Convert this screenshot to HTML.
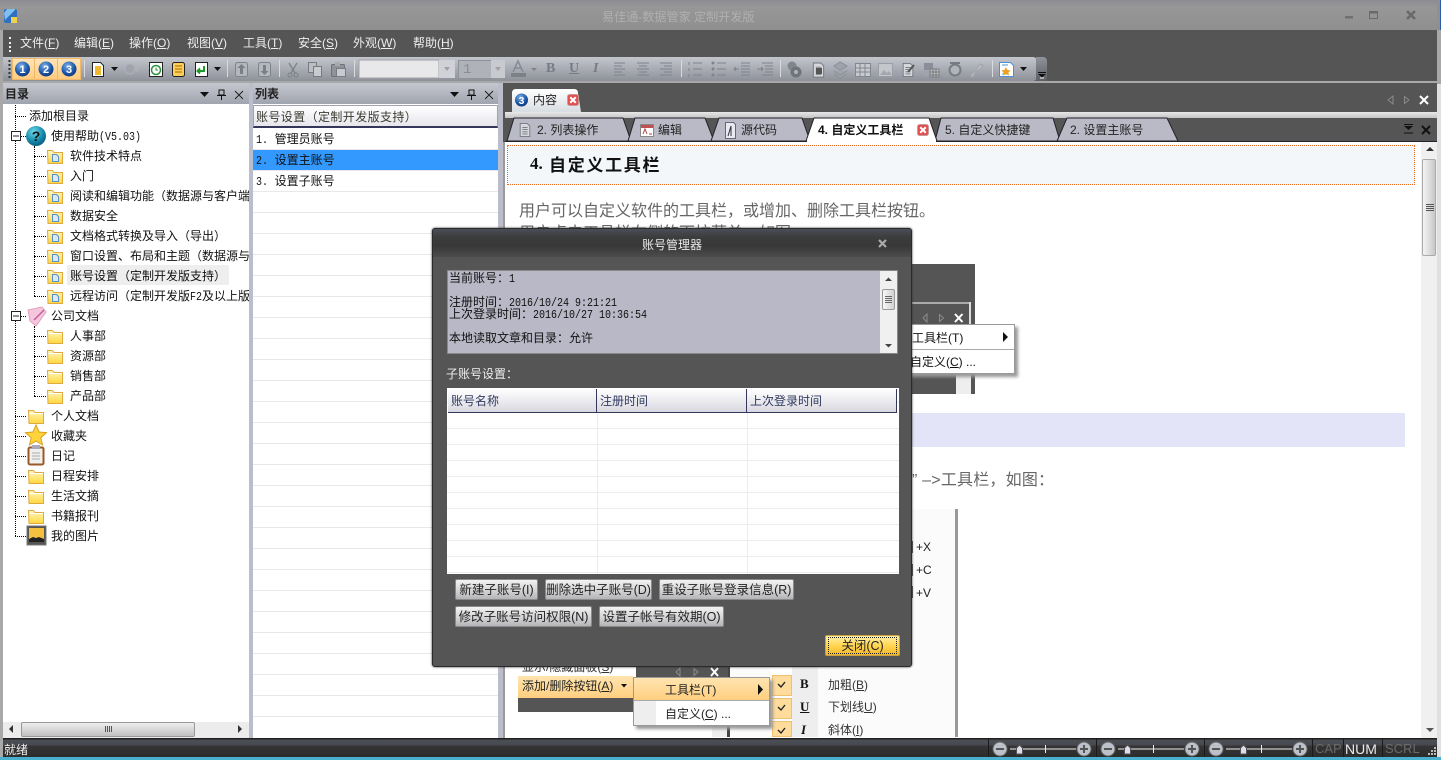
<!DOCTYPE html>
<html lang="zh"><head><meta charset="utf-8"><title>易佳通-数据管家</title>
<style>
html,body{margin:0;padding:0;width:1441px;height:760px;overflow:hidden;background:#fff}
body{position:relative;font:12px/16px "Liberation Sans","WenQuanYi Zen Hei","Noto Sans CJK SC",sans-serif;color:#111}
.a,.t{position:absolute}
.t{white-space:nowrap}
.m{font:10px/16px "Liberation Mono",monospace;display:inline-block;transform:scaleY(1.2)}
.h{border-top:1px dotted #000;height:0;position:absolute}
.v{border-left:1px dotted #000;width:0;position:absolute}
.c{font-size:16px;color:#666;line-height:20px}
.b{position:absolute;box-sizing:border-box;background:linear-gradient(#f2f2f2,#d4d4d6 55%,#b4b4b8);border:1px solid #8a8a8a;border-radius:2px;text-align:center;color:#222;line-height:20px;white-space:nowrap;font-size:12.5px}
svg{position:absolute;left:0;top:0;overflow:visible}
</style></head><body>
<svg width="0" height="0" style="position:absolute"><defs>
<linearGradient id="fg" x1="0" y1="0" x2="0" y2="1"><stop offset="0" stop-color="#fff6c0"/><stop offset="1" stop-color="#ffd83c"/></linearGradient>
<linearGradient id="wh" x1="0" y1="0" x2="0" y2="1"><stop offset="0" stop-color="#fff"/><stop offset="1" stop-color="#d8dde2"/></linearGradient>
<radialGradient id="bl" cx=".4" cy=".3" r=".8"><stop offset="0" stop-color="#7fb0e8"/><stop offset=".6" stop-color="#1b56a8"/><stop offset="1" stop-color="#0d2f6d"/></radialGradient>
<radialGradient id="tq" cx=".4" cy=".3" r=".8"><stop offset="0" stop-color="#6fdcea"/><stop offset=".6" stop-color="#1285a8"/><stop offset="1" stop-color="#0b4f70"/></radialGradient>
<symbol id="fo" viewBox="0 0 16 16"><path d="M.5 2.500h5l1.500 2h8.500v11H1z" fill="url(#fg)" stroke="#e0aa40"/><path d="M1.500 5.500h13.500" stroke="#fff"/></symbol>
<symbol id="fd" viewBox="0 0 16 16"><path d="M.5 2.500h5l1.500 2h8.500v11H1z" fill="url(#fg)" stroke="#e0aa40"/><path d="M5.500 6.500h4l2 2v5h-6z" fill="#d8eafa" stroke="#5a8fc8"/></symbol>
<symbol id="rx" viewBox="0 0 13 13"><rect x=".5" y=".5" width="12" height="12" rx="2.500" fill="#e05050" stroke="#c9a0a0"/><path d="M3.500 3.500l6 6m0-6l-6 6" stroke="#fff" stroke-width="2.200"/></symbol>
<symbol id="gd" viewBox="0 0 16 16"><path d="M2.500.5h8l3 3v12h-11z" fill="#d6d8dc" stroke="#70747c"/><path d="M5 5h6M5 7.500h6M5 10h6M5 12.500h6" stroke="#70747c"/></symbol>
</defs></svg>

<!-- window chrome -->
<div class="a" style="left:0;top:0;width:1441px;height:760px;background:#555"></div>
<div class="a" style="left:0;top:0;width:1441px;height:30px;background:linear-gradient(#8b8b93,#979797 25%,#8f8f8f)"></div>
<div class="a" style="left:0;top:30px;width:3px;height:730px;background:#a8a8a8"></div>
<div class="a" style="left:1437px;top:30px;width:4px;height:54px;background:#a8a8a8"></div>
<div class="a" style="left:1437px;top:84px;width:4px;height:676px;background:#e0e0e0"></div>
<div class="a" style="left:1437px;top:0;width:4px;height:30px;background:#8f8f8f;border-right:1px solid #2a5fb0;box-sizing:border-box"></div>
<svg width="1441" height="30">
<rect x="4" y="9" width="13" height="14" fill="#2f6fc0" rx="2"/><path d="M5 20L15 10v-1H7L4 13z" fill="#7fc0ee"/><rect x="11" y="17" width="6" height="6" fill="#f0d050"/>
<rect x="1345" y="16" width="8" height="2.500" fill="#707070"/>
<rect x="1369.500" y="11.500" width="8" height="7" fill="none" stroke="#6a6a6a"/><rect x="1369" y="11" width="9" height="2.500" fill="#6a6a6a"/>
<path d="M1407 11l8 8m0-8l-8 8" stroke="#6a6a6a" stroke-width="2.600"/>
</svg>
<div class="t" style="left:602px;top:9px;color:#b0b0b0;font-size:12.100px">易佳通-数据管家 定制开发版</div>

<!-- menu -->
<div class="a" style="left:9px;top:37px;height:15px;border-left:2px dotted #eee"></div>
<div class="t" style="left:20px;top:35px;color:#eee">文件(<u>F</u>)</div>
<div class="t" style="left:74px;top:35px;color:#eee">编辑(<u>E</u>)</div>
<div class="t" style="left:129px;top:35px;color:#eee">操作(<u>O</u>)</div>
<div class="t" style="left:187px;top:35px;color:#eee">视图(<u>V</u>)</div>
<div class="t" style="left:243px;top:35px;color:#eee">工具(<u>T</u>)</div>
<div class="t" style="left:298px;top:35px;color:#eee">安全(<u>S</u>)</div>
<div class="t" style="left:353px;top:35px;color:#eee">外观(<u>W</u>)</div>
<div class="t" style="left:413px;top:35px;color:#eee">帮助(<u>H</u>)</div>

<!-- toolbar -->
<div class="a" style="left:3px;top:57px;width:1034px;height:24px;background:linear-gradient(#c2c5cc,#a9acb4 50%,#8e9199);border-radius:0 4px 4px 0"></div>
<div class="a" style="left:1036px;top:57px;width:11px;height:24px;background:linear-gradient(#8f939b,#5c5f65);border-radius:0 4px 0 0"></div>
<div class="a" style="left:3px;top:81px;width:1434px;height:2px;background:#a8a8a8"></div>
<div class="a" style="left:12px;top:58px;width:69px;height:22px;background:linear-gradient(#ffe5b8,#ffcc80);border:1px solid #f0b868;box-sizing:border-box"></div>
<svg width="1441" height="90">
<path d="M9.500 60v18" stroke="#333" stroke-dasharray="2 2" stroke-width="2"/>
<path d="M34.500 58v22M57.500 58v22" stroke="#f0b868"/>
<circle cx="22.500" cy="69" r="7.500" fill="url(#bl)"/><circle cx="46" cy="69" r="7.500" fill="url(#bl)"/><circle cx="69" cy="69" r="7.500" fill="url(#bl)"/>
<text x="22.500" y="73" font-size="11" font-weight="bold" fill="#fff" text-anchor="middle" font-family="Liberation Sans">1</text>
<text x="46" y="73" font-size="11" font-weight="bold" fill="#fff" text-anchor="middle" font-family="Liberation Sans">2</text>
<text x="69" y="73" font-size="11" font-weight="bold" fill="#fff" text-anchor="middle" font-family="Liberation Sans">3</text>
<g stroke="#d8dade"><path d="M84.500 60v17M227.500 60v17M279.500 60v17M354.500 60v17M681.500 60v17M780.500 60v17M992.500 60v17"/></g>
<path d="M92.500 62.500h8l3 3v11h-11z" fill="#fff" stroke="#222"/><path d="M95 66h6v9h-6z" fill="#f0b830"/>
<path d="M111 67h7l-3.500 4z" fill="#111"/>
<circle cx="130" cy="69" r="5" fill="#a0a3ab" stroke="#b0b3ba"/><path d="M134 69h6m-3-3v6" stroke="#b0b3ba"/>
<path d="M149.500 62.500h13v14h-13z" fill="#fff" stroke="#222"/><circle cx="156" cy="70" r="4.500" fill="#fff" stroke="#2a8f3f" stroke-width="1.500"/><path d="M156 67.500V70h2" stroke="#2a8f3f" fill="none"/>
<rect x="172.500" y="62.500" width="12" height="14" rx="2" fill="#ffcf5a" stroke="#222"/><path d="M175 66h7M175 69h7M175 72h7" stroke="#a06a00"/>
<path d="M195.500 62.500h12v14h-12z" fill="#fff" stroke="#222"/><path d="M204 66v5h-6m2-2.500l-2.500 2.500 2.500 2.500" fill="none" stroke="#1c9a2a" stroke-width="2"/>
<path d="M214 67h7l-3.500 4z" fill="#111"/>
<g fill="#b4b7be" stroke="#7f838b"><rect x="235.500" y="62.500" width="12" height="14" rx="2"/><rect x="258.500" y="62.500" width="12" height="14" rx="2"/></g>
<path d="M241.500 64l-4 4h2.500v6h3v-6h2.500z" fill="#7a7e86"/><path d="M264.500 75l-4-4h2.500v-6h3v6h2.500z" fill="#7a7e86"/>
<path d="M289 63l6 10m2-10l-6 10" stroke="#7c8088" stroke-width="1.300"/><circle cx="290" cy="75" r="2" fill="none" stroke="#7c8088"/><circle cx="296" cy="75" r="2" fill="none" stroke="#7c8088"/>
<path d="M308.500 62.500h8v10h-8z" fill="#bcbec4" stroke="#777b83"/><path d="M313.500 66.500h8v10h-8z" fill="#c8cad0" stroke="#777b83"/>
<rect x="331.500" y="64.500" width="13" height="12" rx="1" fill="#8f9299" stroke="#6f7279"/><rect x="336.500" y="68.500" width="9" height="8" fill="#c8cad0" stroke="#777b83"/><rect x="335" y="62" width="5" height="4" fill="#aaa"/>
<rect x="359" y="60" width="80" height="18" fill="#e8e8ea" stroke="#a0a0a8"/>
<rect x="439" y="60" width="16" height="18" fill="#d0d2d8"/><path d="M444 67h6l-3 4z" fill="#a0a0a6"/>
<rect x="458.500" y="60.500" width="33" height="18" fill="#b0b2ba" stroke="#8f9199"/>
<rect x="491" y="60" width="14" height="18" fill="#c8cad0"/><path d="M495 67h6l-3 4z" fill="#a0a0a6"/>
<rect x="511" y="73" width="15" height="4" fill="#7c8088"/><path d="M513 72l5-11 5 11m-8-4h6" fill="none" stroke="#848890" stroke-width="1.500"/>
<path d="M531 68h6l-3 3z" fill="#7c8088"/>
<g stroke="#7f838b" fill="none"><path d="M614 63h11M614 66h8M614 69h11M614 72h8M614 75h11"/><path d="M637 63h12M639 66h8M637 69h12M639 72h8M637 75h12"/><path d="M660 63h12M664 66h8M660 69h12M664 72h8M660 75h12"/>
<path d="M693 63h9M693 69h9M693 75h9M689 62v3M689 68v3M689 74v3"/><path d="M717 63h9M717 69h9M717 75h9"/>
<path d="M741 63h9M741 66h9M741 69h9M741 72h9M741 75h9M739 69h-5m2-2l-2 2 2 2"/>
<path d="M762 63h11M762 75h11M765 66h8M765 69h8M765 72h8M757 69h6m-2-2l2 2-2 2"/></g>
<g fill="#7f838b"><circle cx="713" cy="63" r="1.500"/><circle cx="713" cy="69" r="1.500"/><circle cx="713" cy="75" r="1.500"/></g>
<circle cx="792" cy="66" r="4.500" fill="#81858d"/><circle cx="796" cy="72" r="5.500" fill="#6f737a"/><circle cx="796" cy="72" r="2" fill="#b0b3ba"/>
<use href="#gd" x="811" y="62" width="15" height="16"/><rect x="816" y="68" width="6" height="6" fill="#555"/>
<path d="M834 66l6-4 7 4-7 4zM834 71l6 4 7-4M834 74l6 4 7-4" fill="#a0a3ab" stroke="#8a8e96"/>
<rect x="855.500" y="63.500" width="15" height="13" fill="#c8cad0" stroke="#82868e"/><path d="M855 68h16M855 72h16M860 64v12M865 64v12" stroke="#82868e"/>
<rect x="878.500" y="63.500" width="14" height="13" fill="#c4c6cc" stroke="#9a9ea6"/><path d="M880 75l4-5 3 3 2-2 3 4z" fill="#a4a7ae"/>
<use href="#gd" x="901" y="62" width="14" height="16"/><path d="M908 72l6-7" stroke="#555" stroke-width="2"/>
<rect x="924" y="63" width="9" height="7" fill="#8a8e96"/><rect x="930" y="69" width="9" height="8" fill="#c0c2c8" stroke="#7a7e86"/><rect x="925" y="71" width="4" height="5" fill="#a0a3ab"/><path d="M930 72h9M930 75h9M933 69v8M936 69v8" stroke="#777"/>
<circle cx="955" cy="70" r="5.500" fill="#b0b3ba" stroke="#777b83" stroke-width="2"/><path d="M950 63h10" stroke="#777b83" stroke-width="2"/>
<path d="M970 76l7-8 3-4 3 1-2 4-5 2-3 6z" fill="#b8bac0" stroke="#a0a3aa"/>
<path d="M999.500 62.500h11l3 3v11h-14z" fill="#fff" stroke="#4a90d8"/><path d="M1002 65h6M1002 74h6" stroke="#4a90d8"/><path d="M1006 67l1.500 3 3 .5-2 2 .5 3-3-1.500-3 1.500.5-3-2-2 3-.5z" fill="#f0a020"/>
<path d="M1020 67h7l-3.500 4z" fill="#111"/>
<path d="M1038 72.500h8" stroke="#111"/><path d="M1038 74h8l-4 3.500z" fill="#111"/><path d="M1040 78h4" stroke="#fff"/>
</svg>
<div class="t" style="left:463px;top:61px;font:14px/18px 'Liberation Mono',monospace;color:#8a8d94">1</div>
<div class="t" style="left:546px;top:60px;font:bold 14px/18px 'Liberation Serif',serif;color:#777b83">B</div>
<div class="t" style="left:569px;top:60px;font:bold 14px/18px 'Liberation Serif',serif;color:#777b83;text-decoration:underline">U</div>
<div class="t" style="left:593px;top:60px;font:italic bold 14px/18px 'Liberation Serif',serif;color:#777b83">I</div>

<!-- left panels -->
<div class="a" style="left:3px;top:83px;width:246px;height:21px;background:linear-gradient(#c6c8d0,#a0a4ae)"></div>
<div class="a" style="left:253px;top:83px;width:245px;height:21px;background:linear-gradient(#c6c8d0,#a0a4ae)"></div>
<div class="a" style="left:249px;top:83px;width:4px;height:655px;background:#bcbdcb"></div>
<div class="a" style="left:498px;top:83px;width:5px;height:655px;background:#bcbdcb"></div>
<div class="a" style="left:3px;top:104px;width:246px;height:634px;background:#fff"></div>
<div class="a" style="left:253px;top:104px;width:245px;height:634px;background:#fff"></div>
<div class="t" style="left:5px;top:86px;font-weight:bold;color:#222">目录</div>
<div class="t" style="left:255px;top:86px;font-weight:bold;color:#222">列表</div>
<svg width="520" height="110">
<g id="p"><path d="M200 92h9l-4.500 5z" fill="#111"/><path d="M219 90h5v5h-5zM217 95.500h9M221.500 96v4" stroke="#111" fill="none"/><path d="M235 91l8 8m0-8l-8 8" stroke="#222" stroke-width="1"/></g>
<use href="#p" x="250"/>
</svg>

<!-- tree -->
<div class="v" style="left:15px;top:105px;height:431px"></div>
<div class="v" style="left:34px;top:146px;height:150px"></div>
<div class="v" style="left:34px;top:326px;height:70px"></div>
<div class="h" style="left:15px;top:116px;width:11px"></div>
<div class="h" style="left:20px;top:136px;width:6px"></div>
<div class="h" style="left:20px;top:316px;width:6px"></div>
<div class="h" style="left:34px;top:156px;width:12px"></div>
<div class="h" style="left:34px;top:176px;width:12px"></div>
<div class="h" style="left:34px;top:196px;width:12px"></div>
<div class="h" style="left:34px;top:216px;width:12px"></div>
<div class="h" style="left:34px;top:236px;width:12px"></div>
<div class="h" style="left:34px;top:256px;width:12px"></div>
<div class="h" style="left:34px;top:276px;width:12px"></div>
<div class="h" style="left:34px;top:296px;width:12px"></div>
<div class="h" style="left:34px;top:336px;width:12px"></div>
<div class="h" style="left:34px;top:356px;width:12px"></div>
<div class="h" style="left:34px;top:376px;width:12px"></div>
<div class="h" style="left:34px;top:396px;width:12px"></div>
<div class="h" style="left:15px;top:416px;width:11px"></div>
<div class="h" style="left:15px;top:436px;width:11px"></div>
<div class="h" style="left:15px;top:456px;width:11px"></div>
<div class="h" style="left:15px;top:476px;width:11px"></div>
<div class="h" style="left:15px;top:496px;width:11px"></div>
<div class="h" style="left:15px;top:516px;width:11px"></div>
<div class="h" style="left:15px;top:536px;width:11px"></div>
<div class="a" style="left:67px;top:265px;width:162px;height:20px;background:#eee"></div>
<svg width="260" height="560">
<g fill="#fff" stroke="#222"><rect x="11.500" y="131.500" width="9" height="9"/><rect x="11.500" y="311.500" width="9" height="9"/></g>
<path d="M13 136h6M13 316h6" stroke="#222"/>
<circle cx="36" cy="136" r="10" fill="url(#tq)"/>
<text x="36" y="141" text-anchor="middle" font-size="14" font-weight="bold" fill="#111" font-family="Liberation Sans">?</text>
<use href="#fd" x="47" y="148" width="16" height="16"/><use href="#fd" x="47" y="168" width="16" height="16"/><use href="#fd" x="47" y="188" width="16" height="16"/><use href="#fd" x="47" y="208" width="16" height="16"/><use href="#fd" x="47" y="228" width="16" height="16"/><use href="#fd" x="47" y="248" width="16" height="16"/><use href="#fd" x="47" y="268" width="16" height="16"/><use href="#fd" x="47" y="288" width="16" height="16"/>
<path d="M28 310l14-3 4 5-10 14-6-5z" fill="#f6c6dc" stroke="#e0a0c0"/><path d="M34 320l10-10" stroke="#c060a0" stroke-width="1.500"/>
<use href="#fo" x="47" y="328" width="16" height="16"/><use href="#fo" x="47" y="348" width="16" height="16"/><use href="#fo" x="47" y="368" width="16" height="16"/><use href="#fo" x="47" y="388" width="16" height="16"/>
<use href="#fo" x="28" y="408" width="16" height="16"/>
<path d="M36 425l3 7 7.500.7-5.700 5 1.700 7.300-6.500-4-6.500 4 1.700-7.300-5.700-5 7.500-.7z" fill="#ffd43a" stroke="#d8a020"/>
<rect x="28.500" y="447.500" width="15" height="17" rx="1.500" fill="#f0f0ee" stroke="#9a5a28" stroke-width="2"/><rect x="32" y="445" width="8" height="4" fill="#aab"/><path d="M32 453h8M32 456h8M32 459h8" stroke="#aaa"/>
<use href="#fo" x="28" y="468" width="16" height="16"/><use href="#fo" x="28" y="488" width="16" height="16"/><use href="#fo" x="28" y="508" width="16" height="16"/>
<rect x="27" y="526" width="19" height="19" fill="#555" stroke="#777"/><rect x="29" y="528" width="15" height="14" fill="#f4c040"/><path d="M29 542v-3l4-2 3 1 3-1 5 2v3z" fill="#222"/>
</svg>
<div class="t" style="left:29px;top:108px">添加根目录</div>
<div class="t" style="left:51px;top:128px">使用帮助<span class="m">(V5.03)</span></div>
<div class="t" style="left:70px;top:148px">软件技术特点</div>
<div class="t" style="left:70px;top:168px">入门</div>
<div class="t" style="left:70px;top:188px;width:179px;overflow:hidden">阅读和编辑功能（数据源与客户端</div>
<div class="t" style="left:70px;top:208px">数据安全</div>
<div class="t" style="left:70px;top:228px">文档格式转换及导入（导出）</div>
<div class="t" style="left:70px;top:248px;width:179px;overflow:hidden">窗口设置、布局和主题（数据源与</div>
<div class="t" style="left:70px;top:268px">账号设置（定制开发版支持）</div>
<div class="t" style="left:70px;top:288px;width:179px;overflow:hidden">远程访问（定制开发版<span class="m">F2</span>及以上版本</div>
<div class="t" style="left:51px;top:308px">公司文档</div>
<div class="t" style="left:70px;top:328px">人事部</div>
<div class="t" style="left:70px;top:348px">资源部</div>
<div class="t" style="left:70px;top:368px">销售部</div>
<div class="t" style="left:70px;top:388px">产品部</div>
<div class="t" style="left:51px;top:408px">个人文档</div>
<div class="t" style="left:51px;top:428px">收藏夹</div>
<div class="t" style="left:51px;top:448px">日记</div>
<div class="t" style="left:51px;top:468px">日程安排</div>
<div class="t" style="left:51px;top:488px">生活文摘</div>
<div class="t" style="left:51px;top:508px">书籍报刊</div>
<div class="t" style="left:51px;top:528px">我的图片</div>
<!-- tree scrollbar -->
<div class="a" style="left:3px;top:722px;width:246px;height:16px;background:#ececec"></div>
<div class="a" style="left:21px;top:722px;width:174px;height:15px;box-sizing:border-box;border:1px solid #999;border-radius:2px;background:linear-gradient(#eee,#c0c0c0)"></div>
<svg width="260" height="740"><path d="M13 725v8l-4-4zM238 725v8l4-4z" fill="#333"/><path d="M105.500 726v6M107.500 726v6M109.500 726v6M111.500 726v6" stroke="#555"/></svg>

<!-- list -->
<div class="a" style="left:253px;top:105px;width:245px;height:23px;box-sizing:border-box;background:linear-gradient(#fff,#e6e6ec);border:1px solid #a0a2b4;border-bottom:2px solid #34365a"></div>
<div class="t" style="left:256px;top:109px;color:#3a3a30;letter-spacing:.4px">账号设置（定制开发版支持）</div>
<div class="a" style="left:253px;top:129px;width:245px;height:588px;background:repeating-linear-gradient(#fff 0,#fff 20px,#e8e8ec 20px,#e8e8ec 21px)"></div>
<div class="a" style="left:253px;top:150px;width:245px;height:20px;background:#3399ff"></div>
<div class="t" style="left:256px;top:131px"><span class="m">1.</span>&nbsp; 管理员账号</div>
<div class="t" style="left:256px;top:152px"><span class="m">2.</span>&nbsp; 设置主账号</div>
<div class="t" style="left:256px;top:173px"><span class="m">3.</span>&nbsp; 设置子账号</div>

<!-- content tabs -->
<div class="a" style="left:503px;top:84px;width:934px;height:654px;background:#555"></div>
<div class="a" style="left:505px;top:112px;width:932px;height:6px;background:linear-gradient(#e8e8e8,#c4c4c4)"></div>
<svg width="1441" height="150">
<path d="M512 112V93q0-4 4-4h58q4 0 4 4l3 19z" fill="url(#wh)"/>
<circle cx="521.500" cy="100" r="6.500" fill="url(#bl)"/><text x="521.500" y="104" font-size="10" font-weight="bold" fill="#fff" text-anchor="middle" font-family="Liberation Sans">3</text>
<use href="#rx" x="567" y="94" width="12" height="12"/>
<path d="M1393 96v8l-5-4zM1404.500 96.500l4.500 3.500-4.500 3.500z" fill="none" stroke="#8a8a8a"/>
<path d="M1420 96l8 8m0-8l-8 8" stroke="#fff" stroke-width="2"/>
<g fill="#b9bac6" stroke="#22222a"><path d="M507 141l7-23h109l8 23z"/><path d="M628 141l7-23h70l9 23z"/><path d="M711 141l8-23h83l8 23z"/><path d="M935 141l6-23h112l7 23z"/><path d="M1057 141l10-23h100l11 23z"/></g>
<path d="M806 141l8-23h115l8 23z" fill="#fff" stroke="#22222a"/>
<rect x="505" y="141" width="932" height="1.500" fill="#22222a"/><rect x="807" y="140.500" width="129" height="2" fill="#fff"/>
<use href="#gd" x="518" y="122" width="14" height="16"/>
<rect x="640.500" y="124.500" width="13" height="12" fill="#fff" stroke="#888"/><rect x="641" y="125" width="12" height="3" fill="#c05050"/><path d="M643 134l2-5 2 5M649 134h3" stroke="#b04040" fill="none"/>
<path d="M725.500 122.500h8l2 2v14h-10z" fill="#e8eaf0" stroke="#667"/><path d="M728 136l3-10v10" stroke="#334" fill="none"/>
<use href="#rx" x="917" y="124" width="12" height="12"/>
<path d="M1404 126h9l-4.500 4zM1404 124h9v1h-9z" fill="#111"/><path d="M1404 133h9" stroke="#111"/>
<path d="M1422 126l8 8m0-8l-8 8" stroke="#111" stroke-width="2"/>
</svg>
<div class="t" style="left:533px;top:92px;color:#222">内容</div>
<div class="t" style="left:537px;top:122px;color:#222">2. 列表操作</div>
<div class="t" style="left:658px;top:122px;color:#222">编辑</div>
<div class="t" style="left:741px;top:122px;color:#222">源代码</div>
<div class="t" style="left:818px;top:122px;font-weight:bold;color:#111">4. 自定义工具栏</div>
<div class="t" style="left:945px;top:122px;color:#222">5. 自定义快捷键</div>
<div class="t" style="left:1070px;top:122px;color:#222">2. 设置主账号</div>

<!-- document -->
<div class="a" style="left:505px;top:142px;width:916px;height:596px;background:#fff"></div>
<div class="a" style="left:507px;top:145px;width:908px;height:40px;box-sizing:border-box;background:#f4f7fa;border:1px dotted #f06a20"></div>
<div class="t" style="left:530px;top:153px;font:bold 17px/22px 'Liberation Serif',serif;color:#111">4.</div>
<div class="t" style="left:549px;top:153px;font:bold 17px/22px 'WenQuanYi Zen Hei','Noto Sans CJK SC',serif;color:#111;letter-spacing:1.700px">自定义工具栏</div>
<div class="t c" style="left:519px;top:202px">用户可以自定义软件的工具栏，或增加、删除工具栏按钮。</div>
<div class="t c" style="left:519px;top:224px">用户点击工具栏右侧的下拉菜单，如图：</div>

<!-- image 1 -->
<div class="a" style="left:518px;top:264px;width:457px;height:130px;background:#555"></div>
<div class="a" style="left:518px;top:302px;width:452px;height:2px;background:#aaa"></div>
<div class="a" style="left:969px;top:302px;width:2px;height:24px;background:#ddd"></div>
<div class="a" style="left:956px;top:374px;width:15px;height:20px;background:#eee"></div>
<svg width="1441" height="420"><path d="M927 314v8l-4-4zM939.500 314.500l4 3.500-4 3.500z" fill="none" stroke="#8a8a8a"/><path d="M955 314l7.500 8m0-8l-7.500 8" stroke="#fff" stroke-width="2"/></svg>
<div class="a" style="left:880px;top:324px;width:135px;height:50px;box-sizing:border-box;background:#fff;border:1px solid #999;box-shadow:3px 3px 3px #999"></div>
<div class="a" style="left:881px;top:349px;width:133px;height:1px;background:#aaa"></div>
<svg width="1441" height="420"><path d="M1003 332v10l5-5z" fill="#111"/></svg>
<div class="t" style="left:912px;top:330px">工具栏(T)</div>
<div class="t" style="left:910px;top:354px">自定义(<u>C</u>) ...</div>

<div class="a" style="left:505px;top:413px;width:900px;height:34px;background:#e4e4f8"></div>
<div class="t c" style="left:912px;top:471px;letter-spacing:.2px">” –&gt;工具栏，如图：</div>

<!-- image 2 -->
<div class="a" style="left:712px;top:509px;width:243px;height:228px;background:#fbfbfb"></div>
<div class="a" style="left:955px;top:509px;width:3px;height:228px;background:#999"></div>
<div class="a" style="left:912px;top:541px;width:1px;height:12px;background:#555"></div>
<div class="a" style="left:912px;top:564px;width:1px;height:12px;background:#555"></div>
<div class="a" style="left:912px;top:586px;width:1px;height:12px;background:#555"></div>
<div class="t" style="left:916px;top:539px;color:#222">+X</div>
<div class="t" style="left:916px;top:562px;color:#222">+C</div>
<div class="t" style="left:916px;top:585px;color:#222">+V</div>
<div class="a" style="left:792px;top:660px;width:26px;height:77px;background:#eee"></div>
<div class="a" style="left:770px;top:660px;width:22px;height:77px;background:#fff"></div>
<div class="a" style="left:712px;top:660px;width:15px;height:77px;background:#eee"></div>
<div class="a" style="left:727px;top:660px;width:3px;height:77px;background:#444"></div>
<div class="a" style="left:772px;top:675px;width:20px;height:21px;background:#ffdc9c;border:1px solid #f0c070;box-sizing:border-box"></div>
<div class="a" style="left:772px;top:698px;width:20px;height:21px;background:#ffdc9c;border:1px solid #f0c070;box-sizing:border-box"></div>
<div class="a" style="left:772px;top:721px;width:20px;height:16px;background:#ffdc9c;border:1px solid #f0c070;box-sizing:border-box"></div>
<svg width="1441" height="740"><path d="M778 684l3 3 4-5M778 707l3 3 4-5M778 730l3 3 4-5" fill="none" stroke="#222" stroke-width="1.400"/></svg>
<div class="t" style="left:800px;top:676px;font:bold 13px/16px 'Liberation Serif',serif">B</div>
<div class="t" style="left:800px;top:699px;font:bold 13px/16px 'Liberation Serif',serif;text-decoration:underline">U</div>
<div class="t" style="left:801px;top:722px;font:italic bold 13px/16px 'Liberation Serif',serif">I</div>
<div class="t" style="left:828px;top:677px;color:#333">加粗(<u>B</u>)</div>
<div class="t" style="left:828px;top:699px;color:#333">下划线<u>U</u>)</div>
<div class="t" style="left:828px;top:722px;color:#333">斜体(<u>I</u>)</div>
<div class="a" style="left:518px;top:660px;width:118px;height:16px;background:#fff"></div>
<div class="t" style="left:522px;top:659px;color:#333">显示/隐藏面板(<u>S</u>)</div>
<div class="a" style="left:636px;top:660px;width:92px;height:17px;background:#555"></div>
<div class="a" style="left:518px;top:676px;width:115px;height:22px;background:linear-gradient(#ffe5b0,#ffcf80)"></div>
<div class="a" style="left:518px;top:698px;width:115px;height:14px;background:#555"></div>
<div class="t" style="left:522px;top:678px;color:#222">添加/删除按钮(<u>A</u>)</div>
<svg width="1441" height="740"><path d="M621 684h6l-3 3.500z" fill="#111"/><path d="M680 668v8l-4-4zM694 668.500l4 3.500-4 3.500z" fill="none" stroke="#8a8a8a"/><path d="M711 668l7 8m0-8l-7 8" stroke="#fff" stroke-width="2"/></svg>
<div class="a" style="left:633px;top:677px;width:137px;height:49px;box-sizing:border-box;background:#fff;border:1px solid #999;box-shadow:3px 3px 3px #999"></div>
<div class="a" style="left:634px;top:701px;width:22px;height:24px;background:#eee"></div>
<div class="a" style="left:634px;top:678px;width:135px;height:22px;background:linear-gradient(#ffe5b0,#ffcf80)"></div>
<div class="a" style="left:634px;top:700px;width:135px;height:1px;background:#aaa"></div>
<svg width="1441" height="740"><path d="M758 684v11l5-5.500z" fill="#111"/></svg>
<div class="t" style="left:665px;top:682px;color:#222">工具栏(T)</div>
<div class="t" style="left:665px;top:706px;color:#222">自定义(<u>C</u>) ...</div>

<!-- doc scrollbar -->
<div class="a" style="left:503px;top:142px;width:2px;height:596px;background:#9a9a9a"></div>
<div class="a" style="left:1421px;top:142px;width:16px;height:596px;background:#f0f0f0"></div>
<div class="a" style="left:1422px;top:159px;width:14px;height:97px;box-sizing:border-box;border:1px solid #aaa;border-radius:2px;background:linear-gradient(90deg,#f4f4f4,#c8c8c8)"></div>
<svg width="1441" height="740"><path d="M1426 151h8l-4-4z" fill="#333"/><path d="M1426 728h8l-4 4z" fill="#555"/><path d="M1426 204.500h8M1426 206.500h8M1426 208.500h8M1426 210.500h8" stroke="#555"/></svg>

<!-- status bar -->
<div class="a" style="left:3px;top:738px;width:1434px;height:19px;background:linear-gradient(#202020 0,#202020 1px,#4a4e56 2px,#484a50 7px,#353535 8px,#2c2c2c)"></div>
<div class="a" style="left:0;top:757px;width:1441px;height:3px;background:#4ab0d0"></div>
<div class="t" style="left:4px;top:742px;color:#eee">就绪</div>
<svg width="1441" height="760">
<g stroke="#1a1a1a"><path d="M988.500 739v18M1096.500 739v18M1204.500 739v18M1312.500 739v18M1343.500 739v18M1382.500 739v18"/></g>
<g id="z"><circle cx="1000" cy="749" r="7" fill="#bcc0c8" stroke="#666"/><rect x="996" y="748" width="8" height="2" fill="#555"/>
<circle cx="1084" cy="749" r="7" fill="#bcc0c8" stroke="#666"/><path d="M1080 749h8M1084 745v8" stroke="#555" stroke-width="2"/>
<path d="M1010 749h66M1045.500 745v8" stroke="#eee"/></g>
<use href="#z" x="108"/><use href="#z" x="216"/>
<g fill="#dde" stroke="#555"><path d="M1016.500 748l3-3 3 3v6h-6zM1124.500 748l3-3 3 3v6h-6zM1240.500 748l3-3 3 3v6h-6z"/></g>
<g fill="#bbb"><rect x="1428" y="753" width="2" height="2"/><rect x="1431" y="753" width="2" height="2"/><rect x="1434" y="753" width="2" height="2"/><rect x="1431" y="750" width="2" height="2"/><rect x="1434" y="750" width="2" height="2"/><rect x="1434" y="747" width="2" height="2"/></g>
</svg>
<div class="t" style="left:1315px;top:741px;color:#6a6a6a;font-size:13px">CAP</div>
<div class="t" style="left:1345px;top:741px;color:#eaeaea;font-size:14px">NUM</div>
<div class="t" style="left:1385px;top:741px;color:#6a6a6a;font-size:13px">SCRL</div>

<!-- dialog -->
<div class="a" style="left:432px;top:228px;width:480px;height:439px;box-sizing:border-box;background:#555;border:1px solid #2a2a2a;border-radius:3px;box-shadow:0 0 2px #333"></div>
<div class="a" style="left:433px;top:229px;width:478px;height:28px;background:linear-gradient(#4a4e58,#3c3c3c 30%,#383838 60%,#4c4c4c);border-radius:2px 2px 0 0"></div>
<div class="t" style="left:642px;top:237px;color:#eaeaea;font-size:12px">账号管理器</div>
<svg width="1441" height="260"><path d="M879 240l7 7m0-7l-7 7" stroke="#aaa" stroke-width="2.200"/></svg>
<div class="a" style="left:447px;top:270px;width:451px;height:84px;background:#b8b8c6;border:1px solid #888;box-sizing:border-box"></div>
<div class="a" style="left:880px;top:271px;width:17px;height:82px;background:#f0f0f0"></div>
<div class="a" style="left:882px;top:289px;width:13px;height:21px;box-sizing:border-box;border:1px solid #999;border-radius:2px;background:linear-gradient(90deg,#f8f8f8,#d0d0d0)"></div>
<svg width="1441" height="360"><path d="M885 281h7l-3.500-3.500zM885 344h7l-3.500 3.500z" fill="#444"/><path d="M885 296.500h7M885 298.500h7M885 300.500h7M885 302.500h7" stroke="#666"/></svg>
<div class="t" style="left:449px;top:270px">当前账号：<span class="m">1</span></div>
<div class="t" style="left:449px;top:294px">注册时间：<span class="m">2016/10/24 9:21:21</span></div>
<div class="t" style="left:449px;top:306px">上次登录时间：<span class="m">2016/10/27 10:36:54</span></div>
<div class="t" style="left:449px;top:330px">本地读取文章和目录：允许</div>
<div class="t" style="left:446px;top:366px;color:#eee">子账号设置：</div>
<div class="a" style="left:447px;top:388px;width:452px;height:186px;background:repeating-linear-gradient(#fff 0,#fff 15px,#ececf0 15px,#ececf0 16px);background-position:0 25px"></div>
<div class="a" style="left:597px;top:413px;width:1px;height:161px;background:#ececf0"></div>
<div class="a" style="left:747px;top:413px;width:1px;height:161px;background:#ececf0"></div>
<div class="a" style="left:448px;top:389px;width:449px;height:24px;box-sizing:border-box;background:linear-gradient(#fff,#d8d8e0);border-bottom:1px solid #34365a;border-right:1px solid #34365a"></div>
<div class="a" style="left:596px;top:389px;width:1px;height:24px;background:#34365a"></div>
<div class="a" style="left:746px;top:389px;width:1px;height:24px;background:#34365a"></div>
<div class="t" style="left:451px;top:393px;color:#303a60">账号名称</div>
<div class="t" style="left:600px;top:393px;color:#303a60">注册时间</div>
<div class="t" style="left:750px;top:393px;color:#303a60">上次登录时间</div>
<div class="b" style="left:455px;top:579px;width:83px;height:21px">新建子账号(I)</div>
<div class="b" style="left:545px;top:579px;width:107px;height:21px">删除选中子账号(D)</div>
<div class="b" style="left:659px;top:579px;width:135px;height:21px">重设子账号登录信息(R)</div>
<div class="b" style="left:455px;top:606px;width:137px;height:21px">修改子账号访问权限(N)</div>
<div class="b" style="left:599px;top:606px;width:125px;height:21px">设置子帐号有效期(O)</div>
<div class="b" style="left:825px;top:635px;width:75px;height:21px;background:linear-gradient(#fff0a8,#ffd34a 55%,#f4b830);border-color:#caa040">关闭(C)</div>
<div class="a" style="left:828px;top:637px;width:69px;height:17px;border:1px dotted #222;box-sizing:border-box"></div>
</body></html>
